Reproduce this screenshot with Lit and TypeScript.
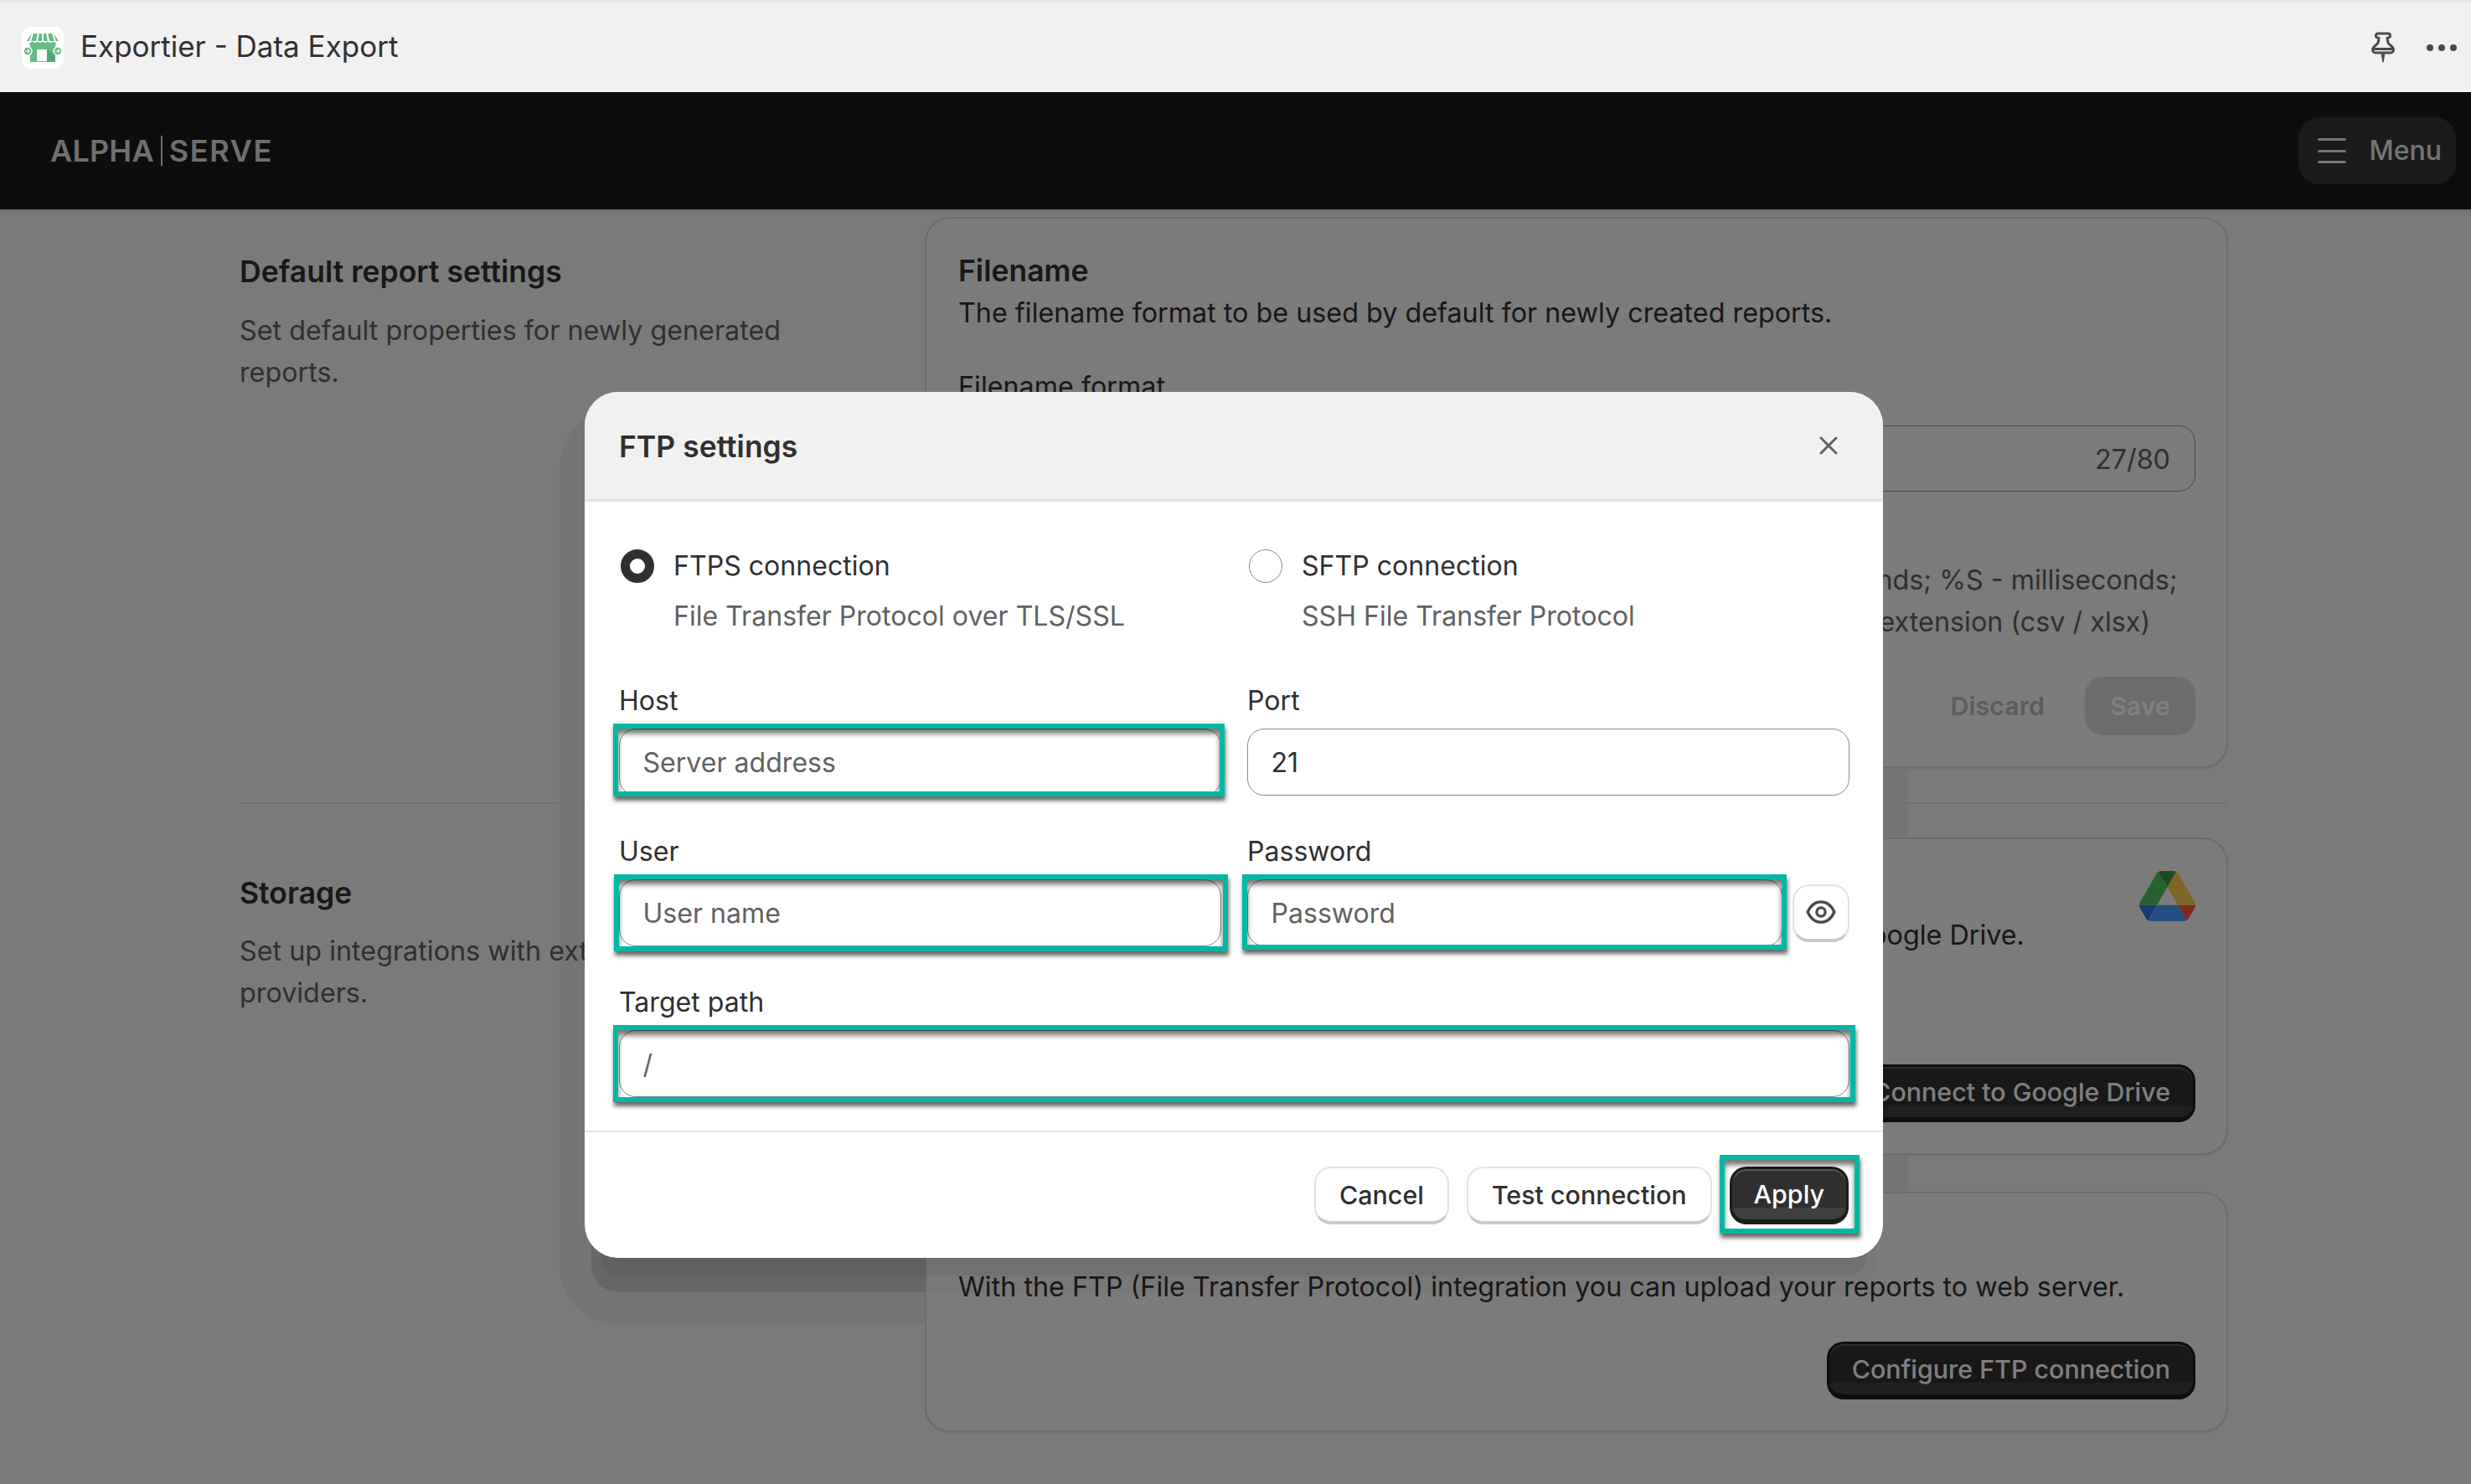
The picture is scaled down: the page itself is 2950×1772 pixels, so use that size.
import { css, html, LitElement } from 'lit';
import { customElement } from 'lit/decorators.js';

@customElement('app-root')
export class AppRoot extends LitElement {
  static override styles = css`
    :host {
      display: block;
      position: relative;
      min-height: 1772px;
      overflow: hidden;
      background: #f5f5f5;
      color: #303030;
      font-family: Inter, 'Liberation Sans', sans-serif;
      font-size: 32.3px;
      line-height: 50px;
    }

    /* shopify admin title bar, stays above the modal backdrop */
    .titlebar {
      display: flex;
      align-items: center;
      height: 107px;
      padding: 0 17px 0 26px;
      background: #f1f1f1;
      border-top: 3px solid #e6e6e6;
    }
    .app-icon {
      width: 50px;
      height: 50px;
      flex: none;
    }
    .app-name {
      margin: 0 0 4px 20px;
      font-size: 35px;
    }
    .titlebar-actions {
      display: flex;
      align-items: center;
      gap: 38px;
      margin-left: auto;
    }

    .nav {
      display: flex;
      align-items: center;
      justify-content: space-between;
      height: 140px;
      padding: 0 18px 0 60px;
      background: #1a1a1a;
      border-bottom: 3px solid #e2e2e2;
    }
    .logo {
      display: flex;
      align-items: center;
      color: #dedede;
      font-size: 36px;
      font-weight: 600;
      line-height: 36px;
    }
    .logo .a {
      letter-spacing: 0.2px;
    }
    .logo .s {
      letter-spacing: 1.6px;
    }
    .logo i {
      width: 2px;
      height: 36px;
      margin: 0 8px;
      background: #dedede;
    }
    .menu {
      display: flex;
      align-items: center;
      gap: 28px;
      height: 80px;
      padding: 0 17px 0 23px;
      border-radius: 25px;
      background: #343434;
      color: #ebebeb;
      font-size: 32px;
      font-weight: 500;
    }
    .burger {
      display: flex;
      flex-direction: column;
      gap: 10.5px;
      width: 34px;
    }
    .burger b {
      height: 3px;
      border-radius: 2px;
      background: #ebebeb;
    }

    .main {
      position: relative;
      z-index: 1;
      padding: 6px 290px 0 286px;
    }
    .section {
      display: flex;
    }
    .section + .section {
      margin-top: 41px;
      padding-top: 40px;
      border-top: 2px solid #e0e0e0;
    }
    .side {
      flex: none;
      width: 700px;
      margin-right: 118px;
      padding-top: 41px;
      color: #616161;
    }
    .section + .section .side {
      padding-top: 42px;
    }
    .side h2,
    .card h2 {
      margin: 0;
      color: #303030;
      font-size: 35.5px;
      font-weight: 600;
      line-height: 50px;
    }
    .side p {
      margin: 20px 0 0;
    }
    .section + .section .side p {
      margin-top: 19px;
    }
    .cards {
      flex: 1;
      min-width: 0;
      display: flex;
      flex-direction: column;
      gap: 44px;
    }
    .card {
      position: relative;
      padding: 38px 37px 37px 38px;
      border: 2px solid #d8d8d8;
      border-radius: 30px;
      background: #f6f6f6;
      box-shadow: 0 2px 0 #e4e4e4;
    }
    .card p {
      margin: 0;
    }
    .card .fname-label {
      margin-top: 38px;
    }
    .fname {
      display: flex;
      justify-content: flex-end;
      align-items: center;
      height: 79px;
      margin-top: 21px;
      padding: 2px 29px 0 0;
      border: 1.5px solid #8a8a8a;
      border-radius: 20px;
      box-sizing: border-box;
      color: #616161;
    }
    .card .help {
      margin-top: 81px;
      color: #616161;
      white-space: nowrap;
    }
    .card-actions {
      display: flex;
      justify-content: flex-end;
      align-items: center;
      gap: 48px;
      margin-top: 40px;
      font-size: 30.4px;
      font-weight: 600;
    }
    .discard {
      color: #b8b8b8;
    }
    .save {
      display: flex;
      align-items: center;
      height: 70px;
      padding: 0 30px;
      border-radius: 22px;
      background: #d6d6d6;
      color: #ffffff;
    }
    .drive {
      position: absolute;
      top: 38px;
      right: 37px;
      width: 67px;
      height: 60px;
    }
    .end {
      display: flex;
      justify-content: flex-end;
    }
    .card.gdrive p {
      margin-top: 2px;
    }
    .gdrive .end {
      margin-top: 129px;
    }
    .card.ftp p {
      margin-top: -1px;
    }
    .ftp .end {
      margin-top: 40px;
    }
    .primary {
      display: flex;
      align-items: center;
      height: 69px;
      padding: 0 27px;
      box-sizing: border-box;
      border: 3px solid #1c1c1c;
      border-bottom-width: 6px;
      border-radius: 20px;
      background: linear-gradient(#303030 76%, #3e3e3e 76%);
      box-shadow: inset 0 2px 0 #5a5a5a;
      color: #ffffff;
      font-size: 30.4px;
      font-weight: 500;
      white-space: nowrap;
    }

    /* modal */
    .halo {
      position: absolute;
      left: 698px;
      top: 468px;
      width: 1550px;
      height: 1034px;
      border-radius: 40px;
      box-shadow: 0 49px 0 -8px #d4d4d4, 0 50px 0 30px #e8e8e8;
    }
    .backdrop {
      position: absolute;
      z-index: 2;
      inset: 110px 0 0 0;
      background: rgba(0, 0, 0, 0.5);
    }
    .dialog {
      position: absolute;
      z-index: 3;
      left: 698px;
      top: 468px;
      width: 1550px;
      height: 1034px;
      border-radius: 40px;
      background: #ffffff;
      font-size: 32.1px;
      box-shadow: 0 41px 0 -20px rgba(0, 0, 0, 0.05), 0 49px 0 -8px rgba(0, 0, 0, 0.02);
    }
    .dialog-head {
      display: flex;
      align-items: center;
      justify-content: space-between;
      height: 131px;
      padding: 0 54px 0 41px;
      box-sizing: border-box;
      border-bottom: 3px solid #e3e3e3;
      border-radius: 40px 40px 0 0;
      background: #f1f1f1;
    }
    .dialog-title {
      margin-top: 4px;
      font-size: 35.5px;
      font-weight: 600;
    }
    .close {
      width: 22px;
      height: 22px;
    }
    .dialog-body {
      padding: 52px 40px 40px 41px;
    }
    .grid {
      display: grid;
      grid-template-columns: 1fr 1fr;
      column-gap: 31px;
    }
    .option {
      display: grid;
      grid-template-columns: 40px 1fr;
      column-gap: 23px;
      align-items: center;
      padding-left: 2px;
    }
    .option p {
      grid-column: 2;
      margin: 10px 0 0;
      color: #616161;
    }
    .radio {
      width: 40px;
      height: 40px;
      box-sizing: border-box;
      border: 1.5px solid #8a8a8a;
      border-radius: 50%;
    }
    .on .radio {
      border: 11px solid #303030;
    }
    .fields {
      row-gap: 42px;
      margin-top: 51px;
    }
    .wide {
      grid-column: 1 / 3;
    }
    .field label {
      display: block;
      margin-bottom: 8px;
    }
    .control {
      position: relative;
    }
    .with-eye {
      display: flex;
      align-items: center;
      gap: 12px;
    }
    .with-eye .control {
      flex: 1;
    }
    input {
      display: block;
      width: 100%;
      height: 80px;
      padding: 0 27.5px;
      box-sizing: border-box;
      border: 1.5px solid #8a8a8a;
      border-radius: 20px;
      background: #fff;
      color: #303030;
      font: inherit;
      outline: none;
    }
    input::placeholder {
      color: #616161;
      opacity: 1;
    }
    .eye {
      flex: none;
      display: flex;
      align-items: center;
      justify-content: center;
      width: 68px;
      height: 69px;
      box-sizing: border-box;
      border: 2px solid #e3e3e3;
      border-bottom: 4px solid #c9c9c9;
      border-radius: 20px;
      background: #fff;
    }
    .dialog-foot {
      display: flex;
      justify-content: flex-end;
      gap: 21px;
      padding: 41px 41px 40px;
      border-top: 2px solid #e3e3e3;
    }
    .secondary {
      display: flex;
      align-items: center;
      height: 69px;
      padding: 0 28px;
      box-sizing: border-box;
      border: 2px solid #e3e3e3;
      border-bottom: 4px solid #c9c9c9;
      border-radius: 20px;
      background: #fff;
      font-size: 30.4px;
      font-weight: 500;
      white-space: nowrap;
    }
    .apply-wrap {
      position: relative;
    }
    .apply-wrap .primary {
      padding: 0 26px;
    }

    /* teal annotation frames drawn over the screenshot */
    .mark {
      position: absolute;
      z-index: 1;
      border: 6px solid #00b9a3;
      box-shadow: 1px 5px 5px rgba(0, 0, 0, 0.6), inset 0 6px 6px rgba(0, 0, 0, 0.55);
      pointer-events: none;
    }
    .mark-host {
      inset: -6px -4px -1px -7px;
    }
    .mark-user {
      inset: -6px -8px -6px -6px;
    }
    .mark-pass {
      inset: -6px -5px -4px -6px;
    }
    .mark-path {
      inset: -6px -7px -6px -7px;
    }
    .mark-apply {
      inset: -14px -13px -11px -12px;
    }
  `;

  private renderField(label: string, placeholder: string, mark: string, value = '') {
    return html`
      <div class="field ${mark === 'path' ? 'wide' : ''}">
        <label>${label}</label>
        <div class="control">
          <input placeholder=${placeholder} .value=${value} />
          ${mark ? html`<span class="mark mark-${mark}"></span>` : ''}
        </div>
      </div>
    `;
  }

  private renderAppIcon() {
    return html`
      <svg class="app-icon" viewBox="0 0 50 50">
        <rect width="50" height="50" rx="11" fill="#fff" />
        <path d="M9 18h32l-1 6v18H10V24z" fill="#65bb87" />
        <path d="M30 42h10V33l-13-8z" fill="#4fa673" />
        <path d="M12 8h26l6 9H6z" fill="#65bb87" />
        <path d="M13 8l-3 9M20 7l-2 10M25 7v10M30 7l2 10M37 8l3 9" stroke="#fff" stroke-width="2" />
        <path d="M6 17q3.500 4 7 0q3 4 6 0q3 4 6 0q3 4 6 0q3 4 6 0q3.500 4 7 0z" fill="#fff" />
        <rect x="18" y="27" width="12" height="14" fill="#fff" />
        <circle cx="7" cy="29" r="5" fill="#65bb87" stroke="#fff" stroke-width="1.500" />
        <circle cx="43" cy="29" r="5" fill="#65bb87" stroke="#fff" stroke-width="1.500" />
        <path d="M4 29h5M7 27l2 2-2 2M40 29h5M43 27l2 2-2 2" fill="none" stroke="#fff" stroke-width="1.200" />
      </svg>
    `;
  }

  private renderDrive() {
    return html`
      <svg class="drive" viewBox="0 0 87.300 78" preserveAspectRatio="none">
        <path d="m6.600 66.850 3.850 6.650c.8 1.400 1.950 2.500 3.300 3.300l13.750-23.800h-27.500c0 1.550.4 3.100 1.200 4.500z" fill="#2e72e6" />
        <path d="m43.650 25-13.750-23.800c-1.350.8-2.500 1.900-3.300 3.300l-25.400 44a9.060 9.060 0 0 0 -1.200 4.500h27.500z" fill="#4ec260" />
        <path d="m73.550 76.800c1.350-.8 2.500-1.900 3.300-3.300l1.600-2.750 7.650-13.250c.8-1.400 1.200-2.950 1.200-4.500h-27.502l5.852 11.500z" fill="#f4563c" />
        <path d="m43.650 25 13.750-23.800c-1.350-.8-2.900-1.200-4.500-1.200h-18.500c-1.600 0-3.150.45-4.500 1.200z" fill="#369440" />
        <path d="m59.800 53h-32.300l-13.750 23.800c1.350.8 2.900 1.200 4.500 1.200h50.800c1.600 0 3.150-.45 4.500-1.200z" fill="#449eff" />
        <path d="m73.400 26.500-12.700-22c-.8-1.400-1.950-2.500-3.300-3.300l-13.750 23.800 16.150 28h27.450c0-1.550-.4-3.100-1.200-4.500z" fill="#fecb4e" />
      </svg>
    `;
  }

  override render() {
    return html`
      <div class="titlebar">
        ${this.renderAppIcon()}
        <span class="app-name">Exportier - Data Export</span>
        <div class="titlebar-actions">
          <svg width="28" height="38" viewBox="0 0 28 38" fill="none" stroke="#4a4a4a" stroke-width="3" stroke-linejoin="round">
            <path d="M8 2h12a2.500 2.500 0 0 1 1 4.800l-2 .7.800 5c.5 3 6.700 4.500 6.700 9a3.500 3.500 0 0 1-3.500 3.500H5a3.500 3.500 0 0 1-3.500-3.500c0-4.500 6.200-6 6.700-9l.8-5-2-.7A2.500 2.500 0 0 1 8 2z" />
            <path d="M3 20.500h22" />
            <path d="M12.500 27h3l-1.500 9z" fill="#4a4a4a" stroke-width="1.500" />
          </svg>
          <svg width="36" height="8" viewBox="0 0 36 8" fill="#4a4a4a">
            <circle cx="4" cy="4" r="4" />
            <circle cx="18" cy="4" r="4" />
            <circle cx="32" cy="4" r="4" />
          </svg>
        </div>
      </div>

      <div class="nav">
        <div class="logo"><span class="a">ALPHA</span><i></i><span class="s">SERVE</span></div>
        <div class="menu">
          <span class="burger"><b></b><b></b><b></b></span>
          Menu
        </div>
      </div>

      <div class="halo"></div>

      <div class="main">
        <div class="section">
          <div class="side">
            <h2>Default report settings</h2>
            <p>Set default properties for newly generated reports.</p>
          </div>
          <div class="cards">
            <div class="card">
              <h2>Filename</h2>
              <p>The filename format to be used by default for newly created reports.</p>
              <p class="fname-label">Filename format</p>
              <div class="fname">27/80</div>
              <p class="help">
                %Y - year;%m - month; %d - day; %H - hours; %M - minute; %s - seconds; %S - milliseconds;<br />
                Filenames: %Y-%m-%d_%H-%M-%s_%S; %r - report names; %e - file extension (csv / xlsx)
              </p>
              <div class="card-actions">
                <span class="discard">Discard</span>
                <span class="save">Save</span>
              </div>
            </div>
          </div>
        </div>
        <div class="section">
          <div class="side">
            <h2>Storage</h2>
            <p>Set up integrations with external storage providers.</p>
          </div>
          <div class="cards">
            <div class="card gdrive">
              ${this.renderDrive()}
              <h2>Google Drive</h2>
              <p>With the Google Drive integration you can also upload your reports to Google Drive.</p>
              <div class="end"><span class="primary">Connect to Google Drive</span></div>
            </div>
            <div class="card ftp">
              <h2>FTP</h2>
              <p>With the FTP (File Transfer Protocol) integration you can upload your reports to web server.</p>
              <div class="end"><span class="primary">Configure FTP connection</span></div>
            </div>
          </div>
        </div>
      </div>

      <div class="backdrop"></div>

      <div class="dialog">
        <div class="dialog-head">
          <span class="dialog-title">FTP settings</span>
          <svg class="close" viewBox="0 0 22 22" stroke="#616161" stroke-width="3" stroke-linecap="round">
            <path d="M2 2l18 18M20 2L2 20" />
          </svg>
        </div>
        <div class="dialog-body">
          <div class="grid">
            <div class="option on">
              <span class="radio"></span>
              <span>FTPS connection</span>
              <p>File Transfer Protocol over TLS/SSL</p>
            </div>
            <div class="option">
              <span class="radio"></span>
              <span>SFTP connection</span>
              <p>SSH File Transfer Protocol</p>
            </div>
          </div>
          <div class="grid fields">
            ${this.renderField('Host', 'Server address', 'host')}
            ${this.renderField('Port', '', '', '21')}
            ${this.renderField('User', 'User name', 'user')}
            <div class="field">
              <label>Password</label>
              <div class="with-eye">
                <div class="control">
                  <input placeholder="Password" />
                  <span class="mark mark-pass"></span>
                </div>
                <span class="eye">
                  <svg width="36" height="28" viewBox="0 0 38 30" fill="none" stroke="#4a4a4a" stroke-width="3.500">
                    <path d="M2 15C6 6 12 2 19 2s13 4 17 13c-4 9-10 13-17 13S6 24 2 15z" />
                    <circle cx="19" cy="15" r="5.500" />
                  </svg>
                </span>
              </div>
            </div>
            ${this.renderField('Target path', '/', 'path')}
          </div>
        </div>
        <div class="dialog-foot">
          <span class="secondary">Cancel</span>
          <span class="secondary">Test connection</span>
          <div class="apply-wrap">
            <span class="primary">Apply</span>
            <span class="mark mark-apply"></span>
          </div>
        </div>
      </div>
    `;
  }
}
